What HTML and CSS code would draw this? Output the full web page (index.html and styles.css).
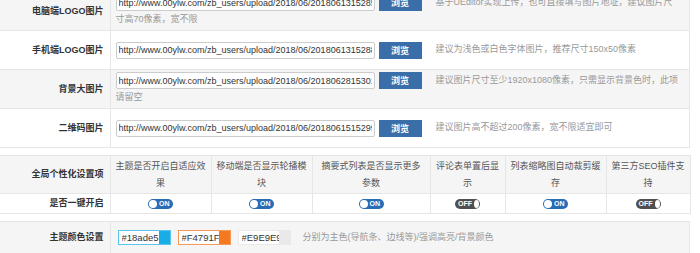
FILE: index.html
```html
<!DOCTYPE html>
<html lang="zh-CN">

<head>
     <meta charset="UTF-8">
     <meta name="viewport" content="width=device-width, initial-scale=1.0">
     <title>主题设置</title>
     <link rel="stylesheet" href="styles.css">
</head>

<body>

     <div id="wrapper">
          <!-- 图片设置 -->
          <table class="cfg img-table">
               <tr class="grey">
                    <th class="label">电脑端LOGO图片</th>
                    <td><input class="url" type="text" value="http://www.00ylw.com/zb_users/upload/2018/06/201806131528561234.png"><button class="browse">浏览</button><span class="tip">基于UEditor实现上传，也可直接填写图片地址，建议图片尺寸高70像素，宽不限</span></td>
               </tr>
               <tr>
                    <th class="label">手机端LOGO图片</th>
                    <td><input class="url" type="text" value="http://www.00ylw.com/zb_users/upload/2018/06/201806131528812345.png"><button class="browse">浏览</button><span class="tip">建议为浅色或白色字体图片，推荐尺寸150x50像素</span></td>
               </tr>
               <tr class="grey">
                    <th class="label">背景大图片</th>
                    <td><input class="url" type="text" value="http://www.00ylw.com/zb_users/upload/2018/06/201806281530123456.jpg"><button class="browse">浏览</button><span class="tip">建议图片尺寸至少1920x1080像素，只需显示背景色时，此项请留空</span></td>
               </tr>
               <tr>
                    <th class="label">二维码图片</th>
                    <td><input class="url" type="text" value="http://www.00ylw.com/zb_users/upload/2018/06/201806151529912345.png"><button class="browse">浏览</button><span class="tip">建议图片高不超过200像素，宽不限适宜即可</span></td>
               </tr>
          </table>

          <!-- 个性化开关 -->
          <table class="cfg opt-table">
               <colgroup>
                    <col class="col-label">
                    <col class="col-a">
                    <col class="col-a">
                    <col class="col-b">
                    <col class="col-c">
                    <col class="col-a">
                    <col class="col-d">
               </colgroup>
               <tr class="grey head">
                    <th class="label">全局个性化设置项</th>
                    <td>主题是否开启自适应效果</td>
                    <td>移动端是否显示轮播模块</td>
                    <td>摘要式列表是否显示更多参数</td>
                    <td>评论表单置后显示</td>
                    <td>列表缩略图自动裁剪缓存</td>
                    <td>第三方SEO插件支持</td>
               </tr>
               <tr class="switches">
                    <th class="label">是否一键开启</th>
                    <td><span class="switch on"><b></b>ON</span></td>
                    <td><span class="switch on"><b></b>ON</span></td>
                    <td><span class="switch on"><b></b>ON</span></td>
                    <td><span class="switch off">OFF<b></b></span></td>
                    <td><span class="switch on"><b></b>ON</span></td>
                    <td><span class="switch off">OFF<b></b></span></td>
               </tr>
          </table>

          <!-- 颜色设置 -->
          <table class="cfg color-table">
               <tr class="grey">
                    <th class="label">主题颜色设置</th>
                    <td>
                         <div class="colors">
                              <span class="color blue"><input type="text" value="#18ade5"><i></i></span>
                              <span class="color orange"><input type="text" value="#F4791F"><i></i></span>
                              <span class="color light"><input type="text" value="#E9E9E9"><i></i></span>
                              <span class="tip">分别为主色(导航条、边线等)/强调高亮/背景颜色</span>
                         </div>
                    </td>
               </tr>
          </table>
     </div>

</body>

</html>
```

FILE: styles.css
```css
* {
     padding: 0;
     margin: 0;
     box-sizing: border-box;
}

body {
     font-family: "Liberation Sans", "Noto Sans CJK SC", sans-serif;
     font-size: 9px;
     color: #333;
     background: #fff;
}

#wrapper {
     width: 690px;
     margin-top: -9px;
}

.cfg {
     width: 100%;
     border-collapse: collapse;
     margin-bottom: 7px;
}

.cfg th,
.cfg td {
     border: 1px solid #e6e6e6;
     line-height: 17px;
     vertical-align: middle;
     font-weight: normal;
}

.cfg .label {
     width: 110px;
     text-align: right;
     padding: 0 6px 0 0;
     font-weight: bold;
     color: #333;
     border-left: 0;
}

.cfg td {
     padding: 1px 5px;
}

.img-table td {
     padding-right: 9px;
}

.grey {
     background: #f5f5f5;
}

.img-table tr {
     height: 39px;
}

.url {
     width: 259px;
     height: 17px;
     padding: 0 2px;
     border: 1px solid #ccc;
     border-radius: 2px;
     background: #fff;
     color: #333;
     font: 9px "Liberation Sans", sans-serif;
     vertical-align: middle;
     outline: none;
}

.browse {
     width: 43px;
     height: 17px;
     margin-left: 4px;
     border: none;
     background: #3a6ea8;
     color: #fff;
     font: bold 9px "Noto Sans CJK SC", sans-serif;
     vertical-align: middle;
     cursor: pointer;
}

.tip {
     color: #999;
     margin-left: 14px;
}

/* 开关表格 */
.opt-table {
     table-layout: fixed;
}

.col-label {
     width: 110px;
}

.col-a {
     width: 101px;
}

.col-b {
     width: 118px;
}

.col-c {
     width: 75px;
}

.col-d {
     width: 84px;
}

.head {
     height: 38px;
}

.head td {
     text-align: center;
     color: #555;
}

.switches {
     height: 20px;
}

.switches td {
     text-align: center;
     padding: 0 5px;
}

.switch {
     display: inline-flex;
     align-items: center;
     gap: 2px;
     width: 25px;
     height: 10px;
     padding: 0 1px;
     border-radius: 5px;
     color: #fff;
     font: bold 7px/10px "Liberation Sans", sans-serif;
     vertical-align: middle;
}

.switch b {
     width: 8px;
     height: 8px;
     border-radius: 50%;
     background: #fff;
}

.switch.on {
     background: #2a6cb6;
}

.switch.off {
     background: #505050;
     justify-content: space-between;
     padding-left: 3px;
}

/* 颜色设置 */
.color-table tr {
     height: 32px;
}

.colors {
     display: flex;
     align-items: center;
     gap: 7px;
     padding-left: 2px;
}

.color {
     display: flex;
     width: 53px;
     height: 15px;
     border: 1px solid #e9e9e9;
     background: #fff;
}

.color input {
     width: 40px;
     height: 100%;
     padding-left: 3px;
     border: none;
     background: transparent;
     color: #333;
     font: 9.5px "Liberation Sans", sans-serif;
     outline: none;
}

.color i {
     flex: 1;
}

.color.blue {
     border-color: #5cc3ec;
}

.color.blue i {
     background: #18ade5;
}

.color.orange {
     border-color: #f79a57;
}

.color.orange i {
     background: #f4791f;
}

.color.light i {
     background: #e9e9e9;
}

.colors .tip {
     margin-left: 5px;
}
```
